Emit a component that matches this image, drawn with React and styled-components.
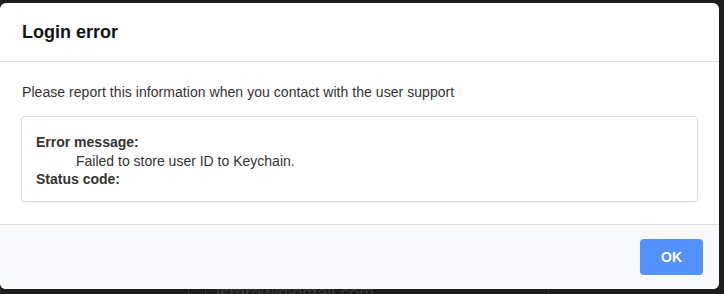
import styled, { createGlobalStyle } from "styled-components";

const GlobalStyle = createGlobalStyle`
  html, body {
    margin: 0;
    padding: 0;
    background: #1d1d1d;
  }
  body {
    font-family: "Liberation Sans", Arial, sans-serif;
    width: 724px;
    height: 294px;
    overflow: hidden;
  }
`;

const Screen = styled.div`
  position: relative;
  width: 724px;
  height: 294px;
  background: #1d1d1d;
  overflow: hidden;
`;

const Behind = styled.div`
  display: flex;
  flex-direction: column;
  justify-content: flex-end;
  height: 100%;
`;

const BehindRow = styled.div`
  display: flex;
  align-items: center;
  gap: 10px;
  height: 14px;
  margin-bottom: -6px;
  padding-left: 173px;
  border-right: 1px solid #2c2c2c;
  width: 374px;
  border-left: 1px solid #2c2c2c;
`;

const BehindBox = styled.span`
  width: 16px;
  height: 8px;
  border: 1px solid #333;
  margin-left: 14px;
`;

const BehindText = styled.span`
  color: #383838;
  font-size: 18px;
`;

const Modal = styled.div`
  position: absolute;
  top: 3px;
  left: 0;
  width: 719px;
  background: #fff;
  border-radius: 6px;
  overflow: hidden;
  display: flex;
  flex-direction: column;
`;

const Header = styled.header`
  height: 58px;
  display: flex;
  align-items: center;
  padding: 0 22px;
  border-bottom: 1px solid #dedede;
`;

const Title = styled.h1`
  margin: 0;
  font-size: 18px;
  font-weight: 700;
  color: #141414;
`;

const Body = styled.section`
  padding: 21px 21px 22px;
  border-bottom: 1px solid #dedede;
`;

const Lead = styled.p`
  margin: 0 0 14px 1px;
  font-size: 14px;
  line-height: 19px;
  color: #333;
  letter-spacing: 0.05px;
`;

const InfoBox = styled.div`
  border: 1px solid #dcdcdc;
  border-radius: 4px;
  box-shadow: 0 1px 2px rgba(0, 0, 0, 0.08);
  padding: 16px 14px 12px;
  font-size: 14px;
  line-height: 18.5px;
  color: #333;
`;

const Label = styled.div`
  font-weight: 700;
`;

const Value = styled.div`
  padding-left: 40px;
`;

const Footer = styled.footer`
  height: 64px;
  background: #f8f9fb;
  display: flex;
  align-items: center;
  justify-content: flex-end;
  padding: 0 16px;
`;

const Button = styled.button`
  width: 63px;
  height: 36px;
  border: none;
  border-radius: 4px;
  background: #5491fc;
  color: #fff;
  font-family: "Liberation Sans", Arial, sans-serif;
  font-size: 14px;
  font-weight: 700;
  cursor: pointer;
`;

export default function App() {
  return (
    <>
      <GlobalStyle />
      <Screen>
        <Behind>
          <BehindRow>
            <BehindBox />
            <BehindText>isrgrow@gmail.com</BehindText>
          </BehindRow>
        </Behind>
        <Modal>
          <Header>
            <Title>Login error</Title>
          </Header>
          <Body>
            <Lead>
              Please report this information when you contact with the user
              support
            </Lead>
            <InfoBox>
              <Label>Error message:</Label>
              <Value>Failed to store user ID to Keychain.</Value>
              <Label>Status code:</Label>
            </InfoBox>
          </Body>
          <Footer>
            <Button>OK</Button>
          </Footer>
        </Modal>
      </Screen>
    </>
  );
}
